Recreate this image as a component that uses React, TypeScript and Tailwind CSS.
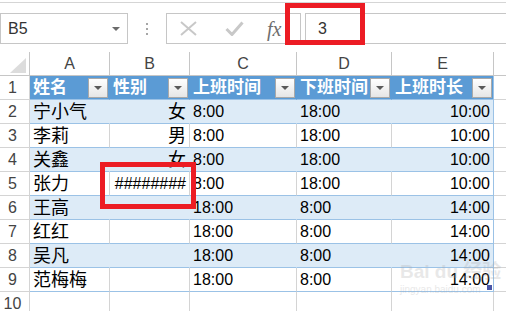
import React from "react";

const rows = [
  ["宁小气", "女", "8:00", "18:00", "10:00"],
  ["李莉", "男", "8:00", "18:00", "10:00"],
  ["关鑫", "女", "8:00", "18:00", "10:00"],
  ["张力", "########", "8:00", "18:00", "10:00"],
  ["王高", "", "18:00", "8:00", "14:00"],
  ["红红", "", "18:00", "8:00", "14:00"],
  ["吴凡", "", "18:00", "8:00", "14:00"],
  ["范梅梅", "", "18:00", "8:00", "14:00"],
];

const headers = ["姓名", "性别", "上班时间", "下班时间", "上班时长"];

function FilterButton() {
  return (
    <span className="ml-auto mr-px w-[20px] h-[20px] shrink-0 border border-[#a9a9a9] bg-gradient-to-b from-white to-[#e6e6e6] flex items-center justify-center">
      <svg width="8" height="4" viewBox="0 0 8 4">
        <path d="M0 0h8L4 4z" fill="#5a5a5a" />
      </svg>
    </span>
  );
}

function RowHead({ n }: { n: number }) {
  return (
    <div className="h-[24px] border-r border-b border-[#d4d4d4] bg-white flex items-center justify-center pr-[4px] text-[16px] text-[#444]">
      {n}
    </div>
  );
}

export default function App() {
  return (
    <div className="relative w-[506px] h-[311px] overflow-hidden bg-white font-[family-name:'Liberation_Sans','Noto_Sans_CJK_SC',sans-serif] text-black">
      {/* formula bar */}
      <div className="h-[52px]">
        <div className="h-[2px]" />
        <div className="h-px bg-[#d5d5d5]" />
        <div className="flex mt-[10px] h-[31px]">
          <div className="w-[128px] h-full border border-[#c6c6c6] flex items-center pl-[7px] pr-[7px]">
            <span className="text-[16px] text-[#333]">B5</span>
            <svg className="ml-auto" width="8" height="4" viewBox="0 0 8 4">
              <path d="M0 0h8L4 4z" fill="#6b6b6b" />
            </svg>
          </div>
          <div className="w-[38px] flex flex-col items-center justify-center gap-[3px]">
            <span className="w-[2px] h-[2px] bg-[#a6a6a6]" />
            <span className="w-[2px] h-[2px] bg-[#a6a6a6]" />
            <span className="w-[2px] h-[2px] bg-[#a6a6a6]" />
          </div>
          <div className="w-[135px] h-full border border-[#c6c6c6] flex items-center">
            <svg className="ml-[13px]" width="17" height="15" viewBox="0 0 17 15">
              <path d="M1 1L16 14M16 1L1 14" stroke="#c8c8c8" strokeWidth="2" />
            </svg>
            <svg className="ml-[28px]" width="19" height="15" viewBox="0 0 19 15">
              <path d="M1.5 8L7 13.5L17.5 1.5" stroke="#c8c8c8" strokeWidth="3" fill="none" />
            </svg>
            <span className="ml-[23px] font-[family-name:'Liberation_Serif',serif] italic text-[20px] text-[#6e6e6e] leading-none">
              fx
            </span>
          </div>
          <div className="ml-[4px] flex-1 h-full border-y border-l border-[#c6c6c6] flex items-center pl-[12px]">
            <span className="text-[16px] text-[#333]">3</span>
          </div>
        </div>
      </div>

      {/* sheet */}
      <div className="grid grid-cols-[30px_80px_80px_107px_95px_102px_1fr]">
        {/* column headers */}
        <div className="relative h-[24px] border-r border-b border-[#c6c6c6] bg-white">
          <svg className="absolute left-0 top-0" width="29" height="24" viewBox="0 0 29 24">
            <path d="M26 6V21H10z" fill="#dcdcdc" />
          </svg>
        </div>
        {["A", "B", "C", "D", "E"].map((c) => (
          <div
            key={c}
            className="h-[24px] border-r border-b border-[#c6c6c6] bg-white flex items-center justify-center text-[16px] text-[#444]"
          >
            {c}
          </div>
        ))}
        <div className="h-[24px] border-b border-[#c6c6c6] bg-white" />

        {/* row 1: table header */}
        <RowHead n={1} />
        {headers.map((h, i) => (
          <div
            key={h}
            className={
              i === 4
                ? "h-[24px] border-r border-b border-r-[#9bc2e6] border-b-[#9bc2e6] bg-[#5b9bd5] flex items-center pl-[3px] overflow-hidden"
                : "h-[24px] border-r border-b border-r-[#5b9bd5] border-b-[#9bc2e6] bg-[#5b9bd5] flex items-center pl-[3px] overflow-hidden"
            }
          >
            <span className="text-[17px] font-bold text-white whitespace-nowrap leading-none">{h}</span>
            <FilterButton />
          </div>
        ))}
        <div className="h-[24px] border-b border-[#d4d4d4]" />

        {/* data rows */}
        {rows.map((r, ri) => {
          const n = ri + 2;
          const blue = n % 2 === 0;
          const base = blue
            ? "h-[24px] border-r border-b border-r-[#ddebf7] border-b-[#9bc2e6] bg-[#ddebf7] flex items-center overflow-hidden whitespace-nowrap"
            : "h-[24px] border-r border-b border-r-[#d4d4d4] border-b-[#9bc2e6] bg-white flex items-center overflow-hidden whitespace-nowrap";
          const last = blue
            ? "relative h-[24px] border-r border-b border-r-[#9bc2e6] border-b-[#9bc2e6] bg-[#ddebf7] flex items-center justify-end pr-[3px] overflow-hidden"
            : "relative h-[24px] border-r border-b border-r-[#9bc2e6] border-b-[#9bc2e6] bg-white flex items-center justify-end pr-[3px] overflow-hidden";
          const hashes = r[1].startsWith("#");
          return (
            <React.Fragment key={n}>
              <RowHead n={n} />
              <div className={base + " pl-[3px]"}>
                <span className="text-[18px] leading-none">{r[0]}</span>
              </div>
              <div className={base + " justify-end pr-[3px]"}>
                <span className={hashes ? "text-[16px] leading-none" : "text-[18px] leading-none"}>{r[1]}</span>
              </div>
              <div className={base + " pl-[3px]"}>
                <span className="text-[16px] leading-none">{r[2]}</span>
              </div>
              <div className={base + " pl-[3px]"}>
                <span className="text-[16px] leading-none">{r[3]}</span>
              </div>
              <div className={last}>
                <span className="text-[16px] leading-none">{r[4]}</span>
                {n === 9 && <span className="absolute right-px bottom-[1px] w-[5px] h-[5px] bg-[#4a56a6]" />}
              </div>
              <div className="h-[24px] border-b border-[#d4d4d4]" />
            </React.Fragment>
          );
        })}

        {/* row 10 */}
        <RowHead n={10} />
        {[0, 1, 2, 3, 4].map((i) => (
          <div key={i} className="h-[24px] border-r border-b border-[#d4d4d4]" />
        ))}
        <div className="h-[24px] border-b border-[#d4d4d4]" />
      </div>

      {/* faint watermark */}
      <div className="absolute left-[400px] top-[262px] pointer-events-none text-[#a8a8a8] opacity-25 leading-none whitespace-nowrap">
        <div className="text-[19px] font-bold">Bai du 经验</div>
        <div className="text-[10px] mt-[4px]">jingyan.baidu.com</div>
      </div>

      {/* red annotation boxes */}
      <div className="absolute left-[285px] top-[3px] w-[80px] h-[42px] border-[5px] border-[#ec1c24]" />
      <div className="absolute left-[100px] top-[162px] w-[96px] h-[47px] border-[5px] border-[#ec1c24]" />
    </div>
  );
}
